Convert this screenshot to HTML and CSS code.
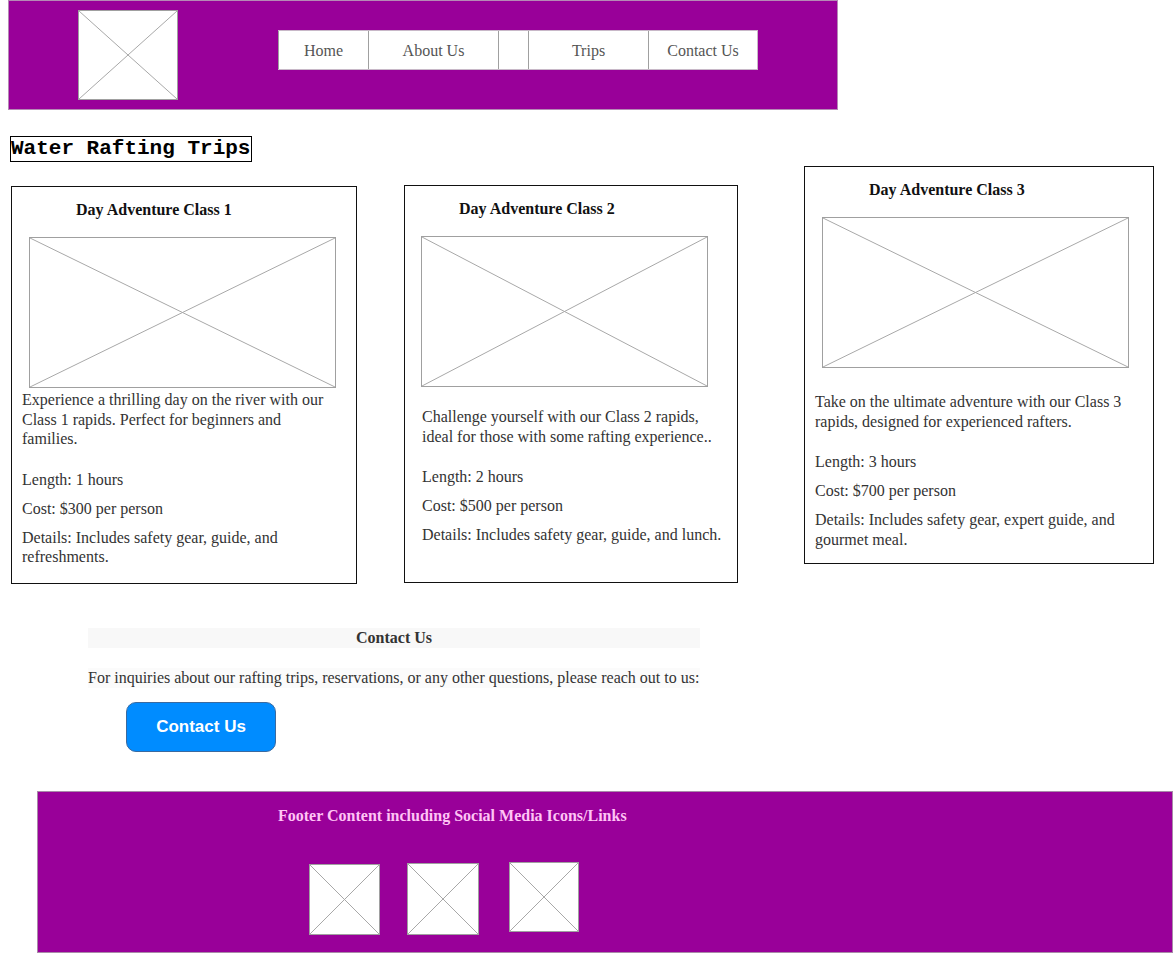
FILE: index.html
```html
<!DOCTYPE html>
<html lang="en">
<head>
<meta charset="utf-8">
<title>Water Rafting Trips</title>
<link rel="stylesheet" href="styles.css">
</head>
<body>
<header class="site-header">
  <div class="logo">
    <svg class="ph" viewBox="0 0 100 100" preserveAspectRatio="none"><line x1="0" y1="0" x2="100" y2="100"/><line x1="100" y1="0" x2="0" y2="100"/></svg>
  </div>
  <nav class="nav">
    <a class="nav-item nav-home" href="#">Home</a>
    <a class="nav-item nav-about" href="#">About Us</a>
    <span class="nav-item nav-blank"></span>
    <a class="nav-item nav-trips" href="#">Trips</a>
    <a class="nav-item nav-contact" href="#">Contact Us</a>
  </nav>
</header>

<h1 class="page-title">Water Rafting Trips</h1>

<section class="cards">
  <article class="card card-1">
    <h2 class="card-title">Day Adventure Class 1</h2>
    <svg class="ph card-img" viewBox="0 0 100 100" preserveAspectRatio="none"><line x1="0" y1="0" x2="100" y2="100"/><line x1="100" y1="0" x2="0" y2="100"/></svg>
    <div class="card-body">
      <p class="desc">Experience a thrilling day on the river with our Class 1 rapids. Perfect for beginners and families.</p>
      <p class="info">Length: 1 hours</p>
      <p class="info">Cost: $300 per person</p>
      <p class="info">Details: Includes safety gear, guide, and refreshments.</p>
    </div>
  </article>
  <article class="card card-2">
    <h2 class="card-title">Day Adventure Class 2</h2>
    <svg class="ph card-img" viewBox="0 0 100 100" preserveAspectRatio="none"><line x1="0" y1="0" x2="100" y2="100"/><line x1="100" y1="0" x2="0" y2="100"/></svg>
    <div class="card-body">
      <p class="desc">Challenge yourself with our Class 2 rapids, ideal for those with some rafting experience..</p>
      <p class="info">Length: 2 hours</p>
      <p class="info">Cost: $500 per person</p>
      <p class="info">Details: Includes safety gear, guide, and lunch.</p>
    </div>
  </article>
  <article class="card card-3">
    <h2 class="card-title">Day Adventure Class 3</h2>
    <svg class="ph card-img" viewBox="0 0 100 100" preserveAspectRatio="none"><line x1="0" y1="0" x2="100" y2="100"/><line x1="100" y1="0" x2="0" y2="100"/></svg>
    <div class="card-body">
      <p class="desc">Take on the ultimate adventure with our Class 3 rapids, designed for experienced rafters.</p>
      <p class="info">Length: 3 hours</p>
      <p class="info">Cost: $700 per person</p>
      <p class="info">Details: Includes safety gear, expert guide, and gourmet meal.</p>
    </div>
  </article>
</section>

<section class="contact">
  <h2 class="contact-title">Contact Us</h2>
  <p class="contact-text">For inquiries about our rafting trips, reservations, or any other questions, please reach out to us:</p>
  <button class="contact-btn" type="button">Contact Us</button>
</section>

<footer class="site-footer">
  <h2 class="footer-title">Footer Content including Social Media Icons/Links</h2>
  <div class="socials">
    <svg class="ph social s1" viewBox="0 0 100 100" preserveAspectRatio="none"><line x1="0" y1="0" x2="100" y2="100"/><line x1="100" y1="0" x2="0" y2="100"/></svg>
    <svg class="ph social s2" viewBox="0 0 100 100" preserveAspectRatio="none"><line x1="0" y1="0" x2="100" y2="100"/><line x1="100" y1="0" x2="0" y2="100"/></svg>
    <svg class="ph social s3" viewBox="0 0 100 100" preserveAspectRatio="none"><line x1="0" y1="0" x2="100" y2="100"/><line x1="100" y1="0" x2="0" y2="100"/></svg>
  </div>
</footer>
</body>
</html>
```

FILE: styles.css
```css
* { box-sizing: border-box; }

body {
  margin: 0;
  font-family: "Liberation Serif", "Times New Roman", serif;
  font-size: 16px;
  color: #333;
  background: #fff;
}

/* placeholder images */
.ph {
  display: block;
  background: #fff;
  border: 1px solid #a0a0a0;
}
.ph line {
  stroke: #a8a8a8;
  stroke-width: 1;
  vector-effect: non-scaling-stroke;
}

/* header */
.site-header {
  margin-left: 8px;
  width: 830px;
  height: 110px;
  background: #990099;
  border: 1px solid #b58ab5;
  display: flex;
  align-items: flex-start;
  padding-left: 69px;
}
.logo {
  margin-top: 9px;
}
.logo .ph {
  width: 100px;
  height: 90px;
}
.nav {
  margin: 29px 0 0 100px;
  display: flex;
  height: 40px;
  background: #fff;
  border: 1px solid #c8b8c8;
  border-left: none;
}
.nav-item {
  display: flex;
  align-items: center;
  justify-content: center;
  border-left: 1px solid #a0a0a0;
  color: #555;
  text-decoration: none;
  font-size: 16px;
  padding-top: 1px;
}
.nav-home { width: 90px; }
.nav-about { width: 130px; }
.nav-blank { width: 30px; }
.nav-trips { width: 120px; }
.nav-contact { width: 109px; }

/* title */
.page-title {
  display: inline-block;
  margin: 26px 0 0 10px;
  border: 1px solid #000;
  font-family: "Liberation Mono", "Courier New", monospace;
  font-weight: bold;
  font-size: 21px;
  line-height: 24px;
  color: #000;
  padding: 0 1px 0 0;
}

/* cards */
.cards {
  display: flex;
  align-items: flex-start;
  margin: 4px 0 0 11px;
}
.card {
  height: 398px;
  border: 1px solid #111;
  background: #fff;
}
.card-1 { width: 346px; margin-top: 20px; }
.card-2 { width: 334px; margin-top: 19px; margin-left: 47px; }
.card-3 { width: 350px; margin-top: 0; margin-left: 66px; }

.card-title {
  margin: 14px 0 0;
  font-size: 16px;
  line-height: 17px;
  font-weight: bold;
  color: #111;
}
.card-1 .card-title { padding-left: 64px; }
.card-2 .card-title { padding-left: 54px; }
.card-3 .card-title { padding-left: 64px; }

.card-img {
  margin-top: 19px;
  height: 151px;
}
.card-1 .card-img { width: 307px; margin-left: 17px; }
.card-2 .card-img { width: 287px; margin-left: 16px; }
.card-3 .card-img { width: 307px; margin-left: 17px; }

.card-body {
  padding: 0 10px;
}
.card-1 .card-body { margin-top: 2px; padding-right: 22px; }
.card-2 .card-body { margin-top: 20px; padding-left: 17px; }
.card-3 .card-body { margin-top: 24px; }

.card-body p {
  margin: 0;
  line-height: 19.5px;
  color: #333;
}
.card-body .desc { margin-bottom: 21px; }
.card-body .info { margin-bottom: 9.5px; }

/* contact */
.contact {
  margin: 44px 0 0 88px;
  width: 612px;
}
.contact-title {
  margin: 0;
  height: 20px;
  line-height: 20px;
  background: #f8f8f8;
  text-align: center;
  font-size: 16px;
  font-weight: bold;
  color: #333;
}
.contact-text {
  margin: 20px 0 0;
  line-height: 20px;
  background: #fbfbfb;
  color: #333;
  white-space: nowrap;
}
.contact-btn {
  display: block;
  margin: 14px 0 0 38px;
  width: 150px;
  height: 50px;
  background: #008cff;
  border: 1px solid #3a6aa0;
  border-radius: 10px;
  color: #fff;
  font-family: "Liberation Sans", Arial, sans-serif;
  font-weight: bold;
  font-size: 17px;
  padding: 0;
}

/* footer */
.site-footer {
  margin: 39px 0 0 37px;
  width: 1136px;
  height: 162px;
  background: #990099;
  border: 1px solid #a88aa8;
  padding: 15px 0 0 240px;
}
.footer-title {
  margin: 0;
  font-size: 16px;
  line-height: 17px;
  font-weight: bold;
  color: #ffc4f5;
}
.socials {
  display: flex;
  align-items: flex-start;
  margin: 38px 0 0 31px;
}
.social.s1 { width: 71px; height: 71px; margin-top: 2px; }
.social.s2 { width: 72px; height: 72px; margin-top: 1px; margin-left: 27px; }
.social.s3 { width: 70px; height: 70px; margin-top: 0; margin-left: 30px; }
```
